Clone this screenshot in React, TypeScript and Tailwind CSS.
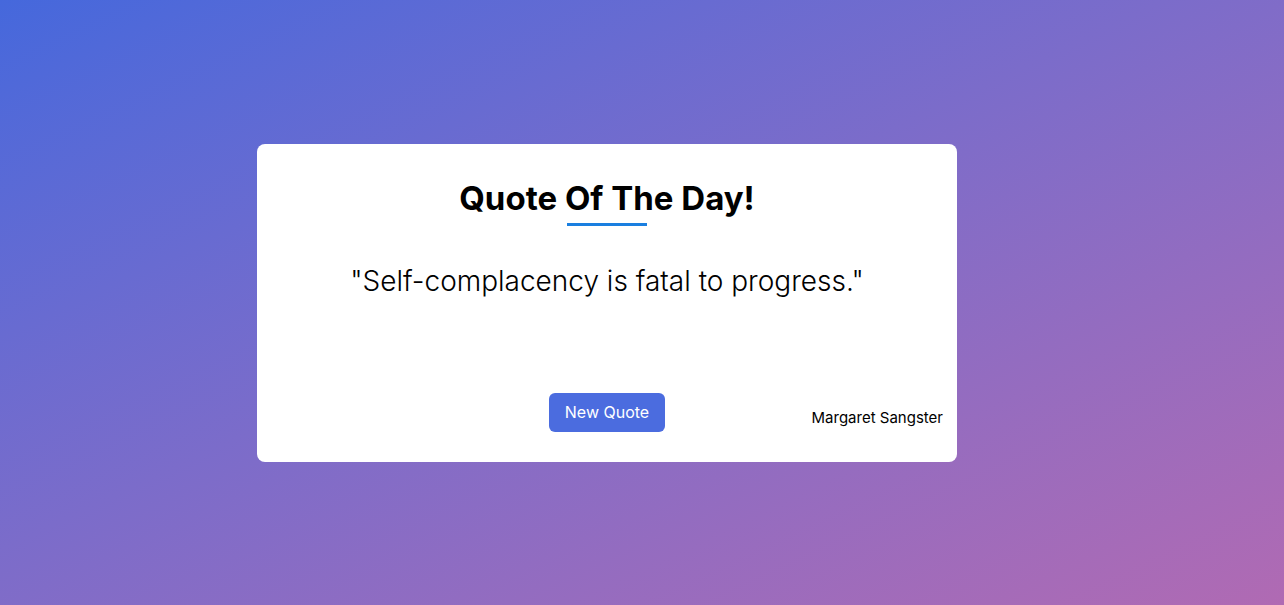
import React from "react";

const quote = {
  text: "Self-complacency is fatal to progress.",
  author: "Margaret Sangster",
};

const App: React.FC = () => {
  return (
    <div className="min-h-screen w-full flex items-center justify-center pr-[70px] bg-gradient-to-br from-[#4568dc] to-[#b06ab3] font-['Inter','Noto_Sans',sans-serif]">
      <div className="w-[700px] h-[318px] bg-white rounded-lg flex flex-col px-[14px] pt-[34px] pb-[30px]">
        <h1 className="text-center text-[33px] leading-[40px] font-bold text-black">
          Quote Of The Day!
        </h1>
        <div className="mx-auto mt-[5px] w-[80px] h-[3px] bg-[#1a7fe0]" />
        <p className="mt-[37px] text-center text-[28px] leading-[36px] font-light text-black">
          "{quote.text}"
        </p>
        <div className="mt-auto grid grid-cols-3 items-end">
          <div />
          <div className="flex justify-center">
            <button className="w-[116px] h-[39px] rounded-md bg-[#4b6cdf] text-white text-[16px]">
              New Quote
            </button>
          </div>
          <div className="flex justify-end pb-[2px]">
            <span className="text-[15px] text-black">{quote.author}</span>
          </div>
        </div>
      </div>
    </div>
  );
};

export default App;
